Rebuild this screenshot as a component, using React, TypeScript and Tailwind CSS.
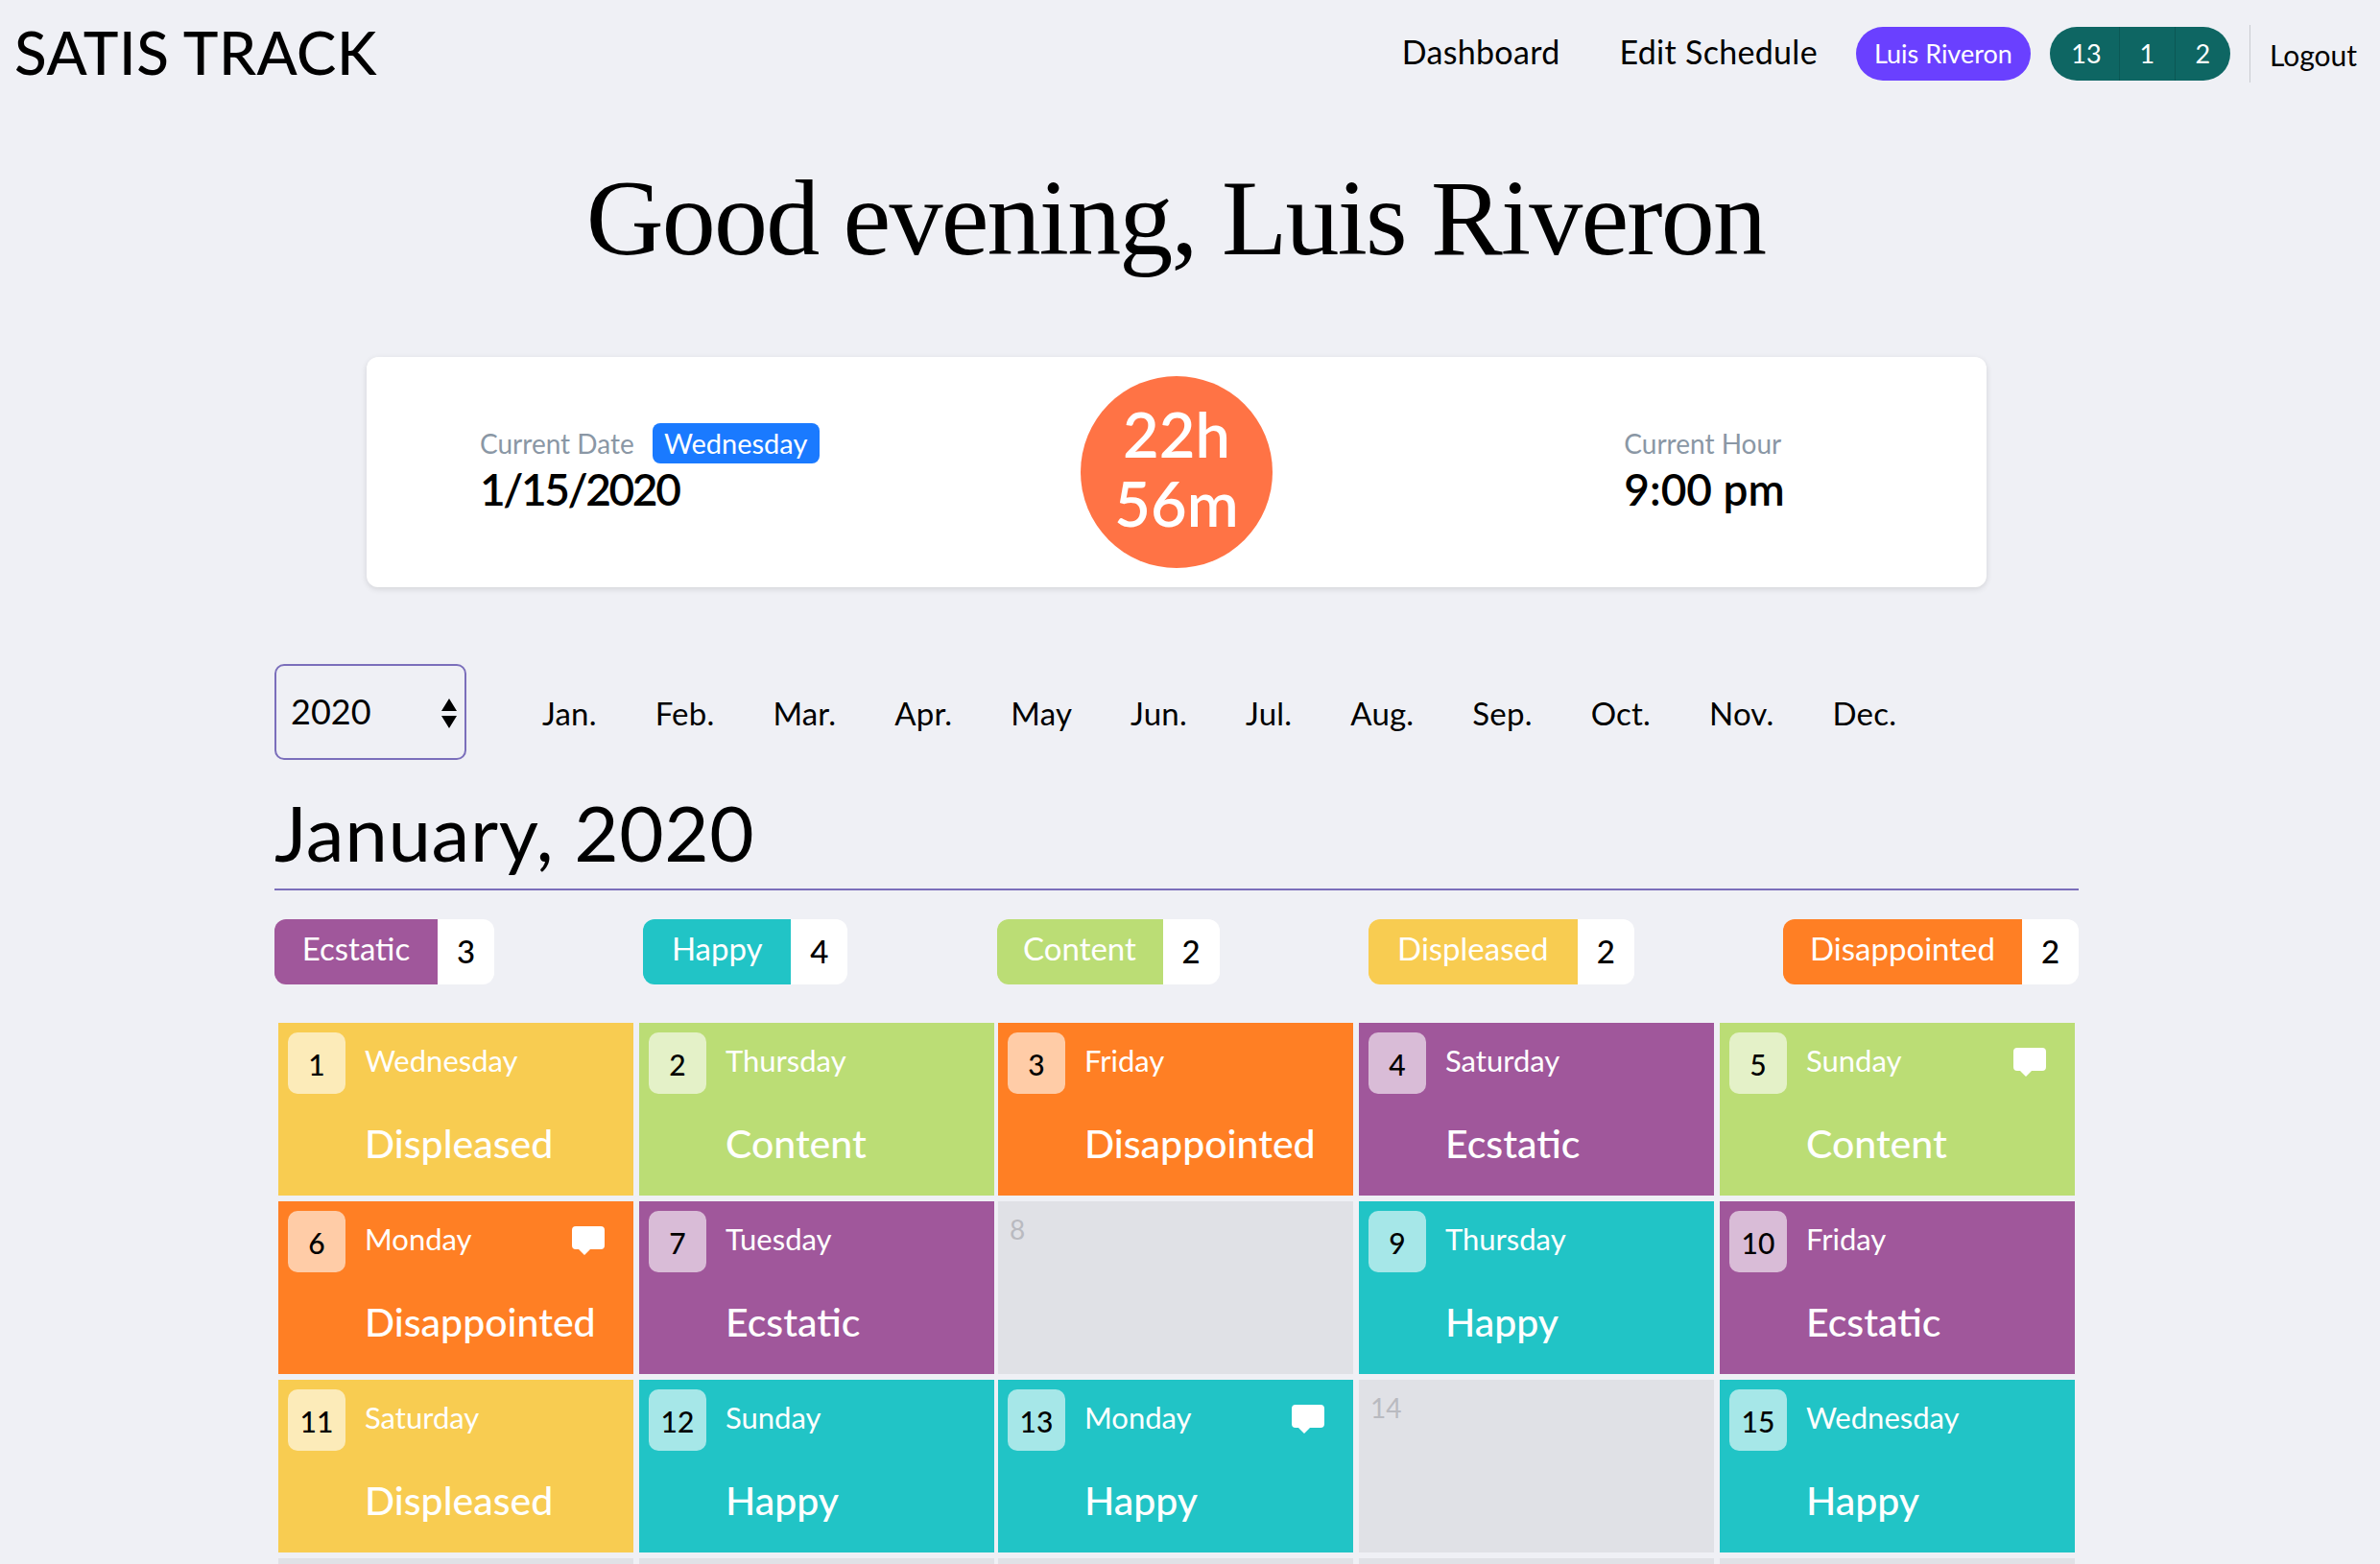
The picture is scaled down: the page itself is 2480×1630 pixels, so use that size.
const legend = [
  { n: "Ecstatic", c: 3, w: "w-[170px]", bg: "bg-[#a0579b]" },
  { n: "Happy", c: 4, w: "w-[154px]", bg: "bg-[#21c4c6]" },
  { n: "Content", c: 2, w: "w-[173px]", bg: "bg-[#bbdd75]" },
  { n: "Displeased", c: 2, w: "w-[218px]", bg: "bg-[#f8cc51]" },
  { n: "Disappointed", c: 2, w: "w-[249px]", bg: "bg-[#ff7f24]" },
];
const styles: Record<string, { bg: string }> = {
  Ecstatic: { bg: "bg-[#a0579b]" },
  Happy: { bg: "bg-[#21c4c6]" },
  Content: { bg: "bg-[#bbdd75]" },
  Displeased: { bg: "bg-[#f8cc51]" },
  Disappointed: { bg: "bg-[#ff7f24]" },
};
type Day = { d: number; day?: string; mood?: string; note?: boolean; blank?: boolean };
const days: Day[] = [
  { d: 1, day: "Wednesday", mood: "Displeased" },
  { d: 2, day: "Thursday", mood: "Content" },
  { d: 3, day: "Friday", mood: "Disappointed" },
  { d: 4, day: "Saturday", mood: "Ecstatic" },
  { d: 5, day: "Sunday", mood: "Content", note: true },
  { d: 6, day: "Monday", mood: "Disappointed", note: true },
  { d: 7, day: "Tuesday", mood: "Ecstatic" },
  { d: 8 },
  { d: 9, day: "Thursday", mood: "Happy" },
  { d: 10, day: "Friday", mood: "Ecstatic" },
  { d: 11, day: "Saturday", mood: "Displeased" },
  { d: 12, day: "Sunday", mood: "Happy" },
  { d: 13, day: "Monday", mood: "Happy", note: true },
  { d: 14 },
  { d: 15, day: "Wednesday", mood: "Happy" },
  { d: 16, blank: true },
  { d: 17, blank: true },
  { d: 18, blank: true },
  { d: 19, blank: true },
  { d: 20, blank: true },
];
const months = ["Jan.", "Feb.", "Mar.", "Apr.", "May", "Jun.", "Jul.", "Aug.", "Sep.", "Oct.", "Nov.", "Dec."];

function Note() {
  return (
    <svg width="34" height="30" viewBox="0 0 34 30" className="absolute right-[30px] top-[26px]">
      <path d="M4 0H30A4 4 0 0 1 34 4V20A4 4 0 0 1 30 24H19L13 30L7 24H4A4 4 0 0 1 0 20V4A4 4 0 0 1 4 0Z" fill="#fff" />
    </svg>
  );
}

function Cell({ c }: { c: Day }) {
  if (!c.mood) {
    return (
      <div className="h-[180px] w-[370px] bg-[#e0e1e6] px-[12px] py-[10px] text-[28px] leading-[38px] text-[#b9bac0]">
        {c.blank ? null : c.d}
      </div>
    );
  }
  return (
    <div className={`relative h-[180px] w-[370px] pl-[10px] pt-[10px] text-white ${styles[c.mood].bg}`}>
      {c.note && <Note />}
      <div className="flex items-start">
        <div className="flex h-[64px] w-[60px] items-center justify-center rounded-[10px] bg-white/60 pt-[3px] text-[30px] font-medium text-black">
          {c.d}
        </div>
        <div className="ml-[20px] mt-[9px] text-[31px] leading-[40px]">{c.day}</div>
      </div>
      <div className="ml-[80px] mt-[24px] text-[41px] leading-[56px] font-medium">{c.mood}</div>
    </div>
  );
}

export default function App() {
  return (
    <div className="h-[1630px] overflow-hidden bg-[#eff0f5] font-['Lato','Noto_Sans',sans-serif] text-black">
      <header className="flex h-[112px] items-center pl-[15px] pr-[24px]">
        <div className="mt-[-5px] text-[62px] leading-none font-medium tracking-[0.5px]">SATIS TRACK</div>
        <nav className="ml-auto flex items-center text-[34px]">
          <span className="mr-[62px] mt-[-6px] tracking-[0.3px]">Dashboard</span>
          <span className="mr-[40px] mt-[-6px] tracking-[0.3px]">Edit Schedule</span>
          <span className="mr-[20px] flex h-[56px] w-[182px] items-center justify-center rounded-[28px] bg-[#6a40ff] text-[27px] text-white">
            Luis Riveron
          </span>
          <span className="flex h-[56px] w-[188px] overflow-hidden rounded-[28px] bg-[#0e6663] text-[27px] text-white">
            <span className="flex w-[72px] items-center justify-center pl-[4px]">13</span>
            <span className="flex w-[58px] items-center justify-center border-l border-[#0b5855]">1</span>
            <span className="flex w-[58px] items-center justify-center border-l border-[#0b5855]">2</span>
          </span>
          <span className="ml-[20px] h-[60px] w-px bg-[#c9cbd0]" />
          <span className="ml-[20px] mt-[2px] text-[30px]">Logout</span>
        </nav>
      </header>

      <h1 className="mt-[55px] w-[2450px] text-center font-['Liberation_Serif',serif] text-[112px] leading-[120px] font-normal tracking-[-1.8px]">
        Good evening, Luis Riveron
      </h1>

      <section className="ml-[382px] mt-[85px] grid h-[240px] w-[1688px] grid-cols-3 items-center rounded-[12px] bg-white shadow-[0_2px_6px_rgba(0,0,0,0.12)]">
        <div className="mt-[-8px] pl-[118px]">
          <div className="flex items-center">
            <span className="text-[28px] text-[#8a97a5]">Current Date</span>
            <span className="ml-[19px] flex h-[42px] w-[174px] items-center justify-center rounded-[8px] bg-[#1a7aff] text-[29px] text-white">
              Wednesday
            </span>
          </div>
          <div className="mt-[2px] text-[46px] leading-[50px] font-semibold tracking-[-2.4px]">1/15/2020</div>
        </div>
        <div className="flex justify-center">
          <div className="flex h-[200px] w-[200px] flex-col items-center justify-center rounded-full bg-[#ff7345] pb-[8px] text-[65px] leading-[72px] font-semibold text-white">
            <span>22h</span>
            <span>56m</span>
          </div>
        </div>
        <div className="mt-[-8px] pl-[185px]">
          <div className="text-[28px] text-[#8a97a5]">Current Hour</div>
          <div className="mt-[2px] text-[46px] leading-[50px] font-semibold">9:00 pm</div>
        </div>
      </section>

      <main className="ml-[286px] w-[1880px]">
        <div className="mt-[80px] flex items-center">
          <div className="relative flex h-[100px] w-[200px] items-center rounded-[10px] border-2 border-[#7b6fbb] pl-[15px] text-[36px]">
            <span className="mt-[-2px]">2020</span>
            <svg width="18" height="32" viewBox="0 0 18 32" className="absolute right-[7px] top-[34px]">
              <path d="M9 0L17 13H1Z M1 18H17L9 31Z" fill="#000" />
            </svg>
          </div>
          <div className="ml-[79px] mt-[4px] flex gap-[61px] text-[33px] tracking-[0.2px]">
            {months.map((m) => (
              <span key={m}>{m}</span>
            ))}
          </div>
        </div>

        <h2 className="mt-[27px] border-b-2 border-[#7b6fbb] pb-[11px] text-[80px] leading-[96px] font-normal tracking-[0.6px]">
          January, 2020
        </h2>

        <div className="mt-[30px] flex justify-between">
          {legend.map((l) => (
            <div key={l.n} className="flex h-[68px] overflow-hidden rounded-[12px] bg-white text-[33px]">
              <span className={`flex items-center justify-center pb-[6px] text-white ${l.w} ${l.bg}`}>{l.n}</span>
              <span className="flex w-[59px] items-center justify-center font-medium">{l.c}</span>
            </div>
          ))}
        </div>

        <div className="ml-[4px] mt-[40px] grid grid-cols-[376px_374px_376px_376px_370px] gap-y-[6px]">
          {days.map((c) => (
            <Cell key={c.d} c={c} />
          ))}
        </div>
      </main>
    </div>
  );
}
